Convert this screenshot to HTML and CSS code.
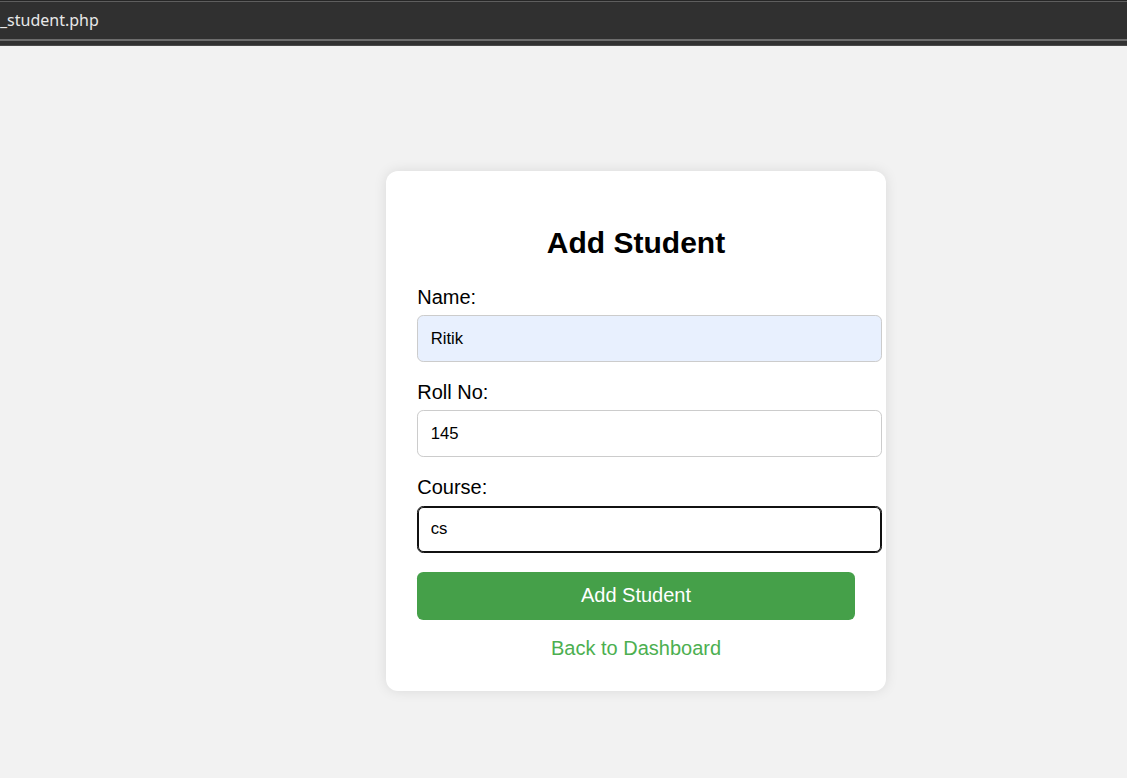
FILE: index.html
```html
<!DOCTYPE html>
<html>
<head>
    <title>Add Student</title>
    <link rel="stylesheet" href="styles.css">
</head>
<body>

<!-- WINDOW BAR -->
<div class="titlebar">
    <div class="tab"><span>_student.php</span></div>
</div>

<div class="page">
    <div class="card">
        <h2>Add Student</h2>
        <form>
            <label for="name">Name:</label>
            <input id="name" class="autofill" value="Ritik">

            <label for="roll">Roll No:</label>
            <input id="roll" value="145">

            <label for="course">Course:</label>
            <input id="course" class="focused" value="cs">

            <button type="button">Add Student</button>
        </form>
        <a class="back" href="#">Back to Dashboard</a>
    </div>
</div>

</body>
</html>
```

FILE: styles.css
```css
body {
    margin: 0;
    background: #f2f2f2;
    font-family: "Liberation Sans", Arial, sans-serif;
    height: 778px;
    overflow: hidden;
}

.titlebar {
    height: 46px;
    box-sizing: border-box;
    background: #323232;
    border-top: 1px solid #262626;
    border-bottom: 1px solid #4a4a4a;
    padding-bottom: 4px;
    display: flex;
    flex-direction: column;
}

.tab {
    flex: 1;
    display: flex;
    align-items: center;
    border-top: 1px solid #5e5e5e;
    border-bottom: 2px solid #6c6c6c;
    background: #303030;
    color: #e8e8e8;
    font-family: "Noto Sans", "Open Sans", sans-serif;
    font-size: 16px;
    padding-bottom: 1px;
}

.page {
    padding-top: 125px;
}

.card {
    width: 437.5px;
    margin-left: 386px;
    padding: 31.25px;
    background: white;
    border-radius: 12px;
    box-shadow: 0 0 12.5px rgba(0, 0, 0, 0.1);
}

h2 {
    text-align: center;
    font-size: 30px;
    margin: 24px 0 25.5px;
}

label {
    display: block;
    font-size: 20px;
    margin-bottom: 6.25px;
}

input {
    display: block;
    width: 100%;
    padding: 12.5px;
    margin: 0 0 19px;
    border: 1px solid #ccc;
    border-radius: 6.25px;
    font-family: "Liberation Sans", Arial, sans-serif;
    font-size: 16.67px;
    color: black;
    background: white;
    outline: none;
}

.autofill {
    background: #e8f0fe;
}

.focused {
    border-color: #111;
    box-shadow: inset 0 0 0 1px #111;
}

button {
    display: block;
    box-sizing: border-box;
    width: 100%;
    padding: 12.5px;
    border: none;
    border-radius: 6.25px;
    background: #45a049;
    color: white;
    font-family: "Liberation Sans", Arial, sans-serif;
    font-size: 20px;
    cursor: pointer;
}

.back {
    display: block;
    margin-top: 17.5px;
    text-align: center;
    font-size: 20px;
    color: #4caf50;
    text-decoration: none;
}
```
